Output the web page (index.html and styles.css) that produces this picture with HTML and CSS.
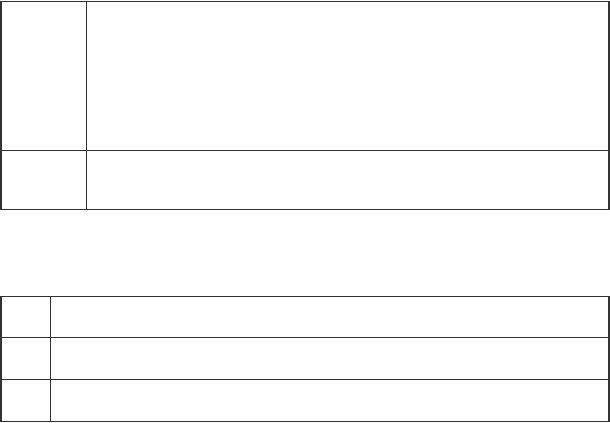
FILE: index.html
```html
<!DOCTYPE html>
<html>
<head>
<meta charset="utf-8">
<link rel="stylesheet" href="styles.css">
</head>
<body>
<div class="page">
  <table class="grid grid-a">
    <tr class="row-tall"><td class="label-a"></td><td></td></tr>
    <tr class="row-short"><td class="label-a"></td><td></td></tr>
  </table>
  <table class="grid grid-b">
    <tr class="row-b row-first"><td class="label-b"></td><td></td></tr>
    <tr class="row-b"><td class="label-b"></td><td></td></tr>
    <tr class="row-b"><td class="label-b"></td><td></td></tr>
  </table>
</div>
</body>
</html>
```
FILE: styles.css
```css
html, body {
  margin: 0;
  padding: 0;
  background: #ffffff;
  font-family: "Liberation Sans", Arial, sans-serif;
}
.page {
  display: flex;
  flex-direction: column;
  padding-top: 1px;
  gap: 86px;
}
.grid {
  width: 610px;
  border-collapse: collapse;
  border-left: 2px solid #333333;
  border-right: 2px solid #333333;
}
.grid td {
  border: 1px solid #333333;
  padding: 0;
}
.grid td:first-child {
  border-left: 2px solid #333333;
}
.grid td:last-child {
  border-right: 2px solid #333333;
}
.row-tall { height: 149px; }
.row-short { height: 59px; }
.row-b { height: 42px; }
.row-b.row-first { height: 41px; }
.label-a { width: 84px; }
.label-b { width: 48px; }
```
